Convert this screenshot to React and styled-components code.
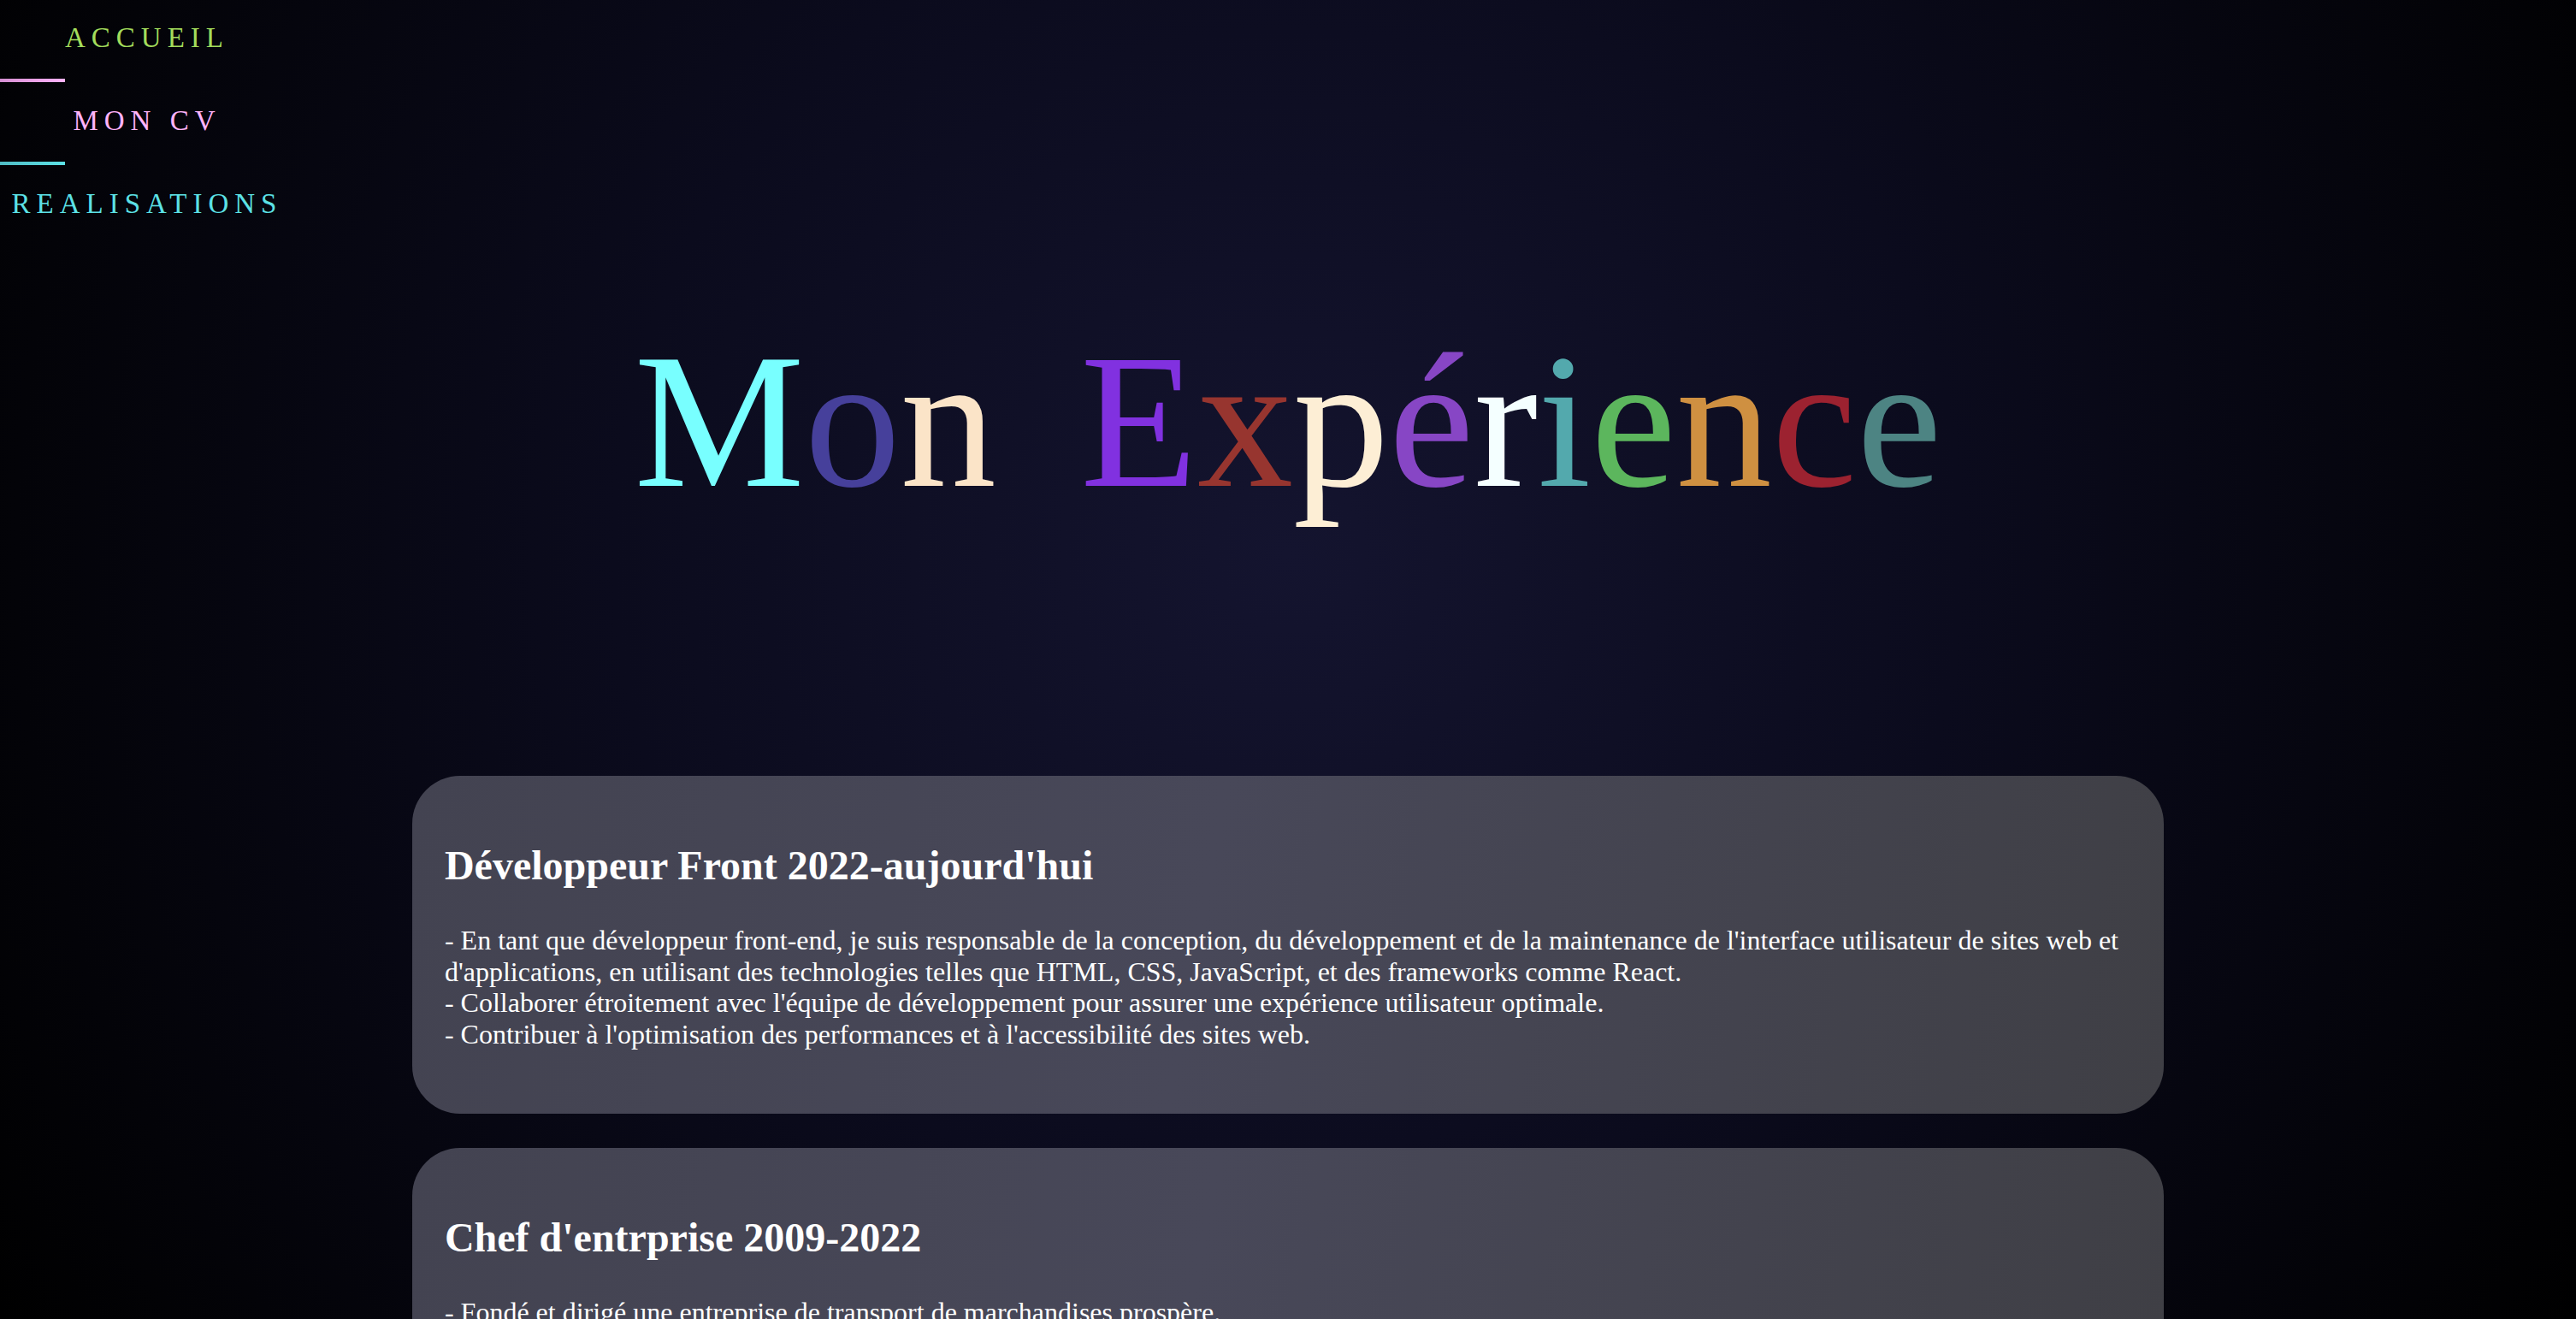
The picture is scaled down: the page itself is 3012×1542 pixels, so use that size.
import styled, { createGlobalStyle } from "styled-components";

const GlobalStyle = createGlobalStyle`
  html, body {
    margin: 0;
    padding: 0;
  }
  body {
    min-height: 100vh;
    background: radial-gradient(circle at 50% 42%, #14142f 0%, #0b0b1d 45%, #000 100%) fixed;
    font-family: "Liberation Serif", "Times New Roman", serif;
    color: #fff;
  }
`;

const titleLetters = [
  ["M", "#78ffff"],
  ["o", "#46409b"],
  ["n", "#fbe4c8"],
  [" ", null],
  ["E", "#8131e0"],
  ["x", "#97352f"],
  ["p", "#fdeed5"],
  ["é", "#8746c5"],
  ["r", "#f4ffff"],
  ["i", "#53a9ad"],
  ["e", "#5cb65d"],
  ["n", "#cf9041"],
  ["c", "#9c2230"],
  ["e", "#4d8483"],
];

const experiences = [
  {
    title: "Développeur Front 2022-aujourd'hui",
    lines: [
      "- En tant que développeur front-end, je suis responsable de la conception, du développement et de la maintenance de l'interface utilisateur de sites web et d'applications, en utilisant des technologies telles que HTML, CSS, JavaScript, et des frameworks comme React.",
      "- Collaborer étroitement avec l'équipe de développement pour assurer une expérience utilisateur optimale.",
      "- Contribuer à l'optimisation des performances et à l'accessibilité des sites web.",
    ],
  },
  {
    title: "Chef d'entrprise 2009-2022",
    lines: [
      "- Fondé et dirigé une entreprise de transport de marchandises prospère.",
    ],
  },
];

const App = () => {
  return (
    <Page>
      <GlobalStyle />
      <Nav>
        <NavLink $color="#a3dd5c">ACCUEIL</NavLink>
        <Divider $from="#d58fd2" $to="#ffb3fa" />
        <NavLink $color="#ffb3fa">MON CV</NavLink>
        <Divider $from="#4fbcc4" $to="#5ce1e6" />
        <NavLink $color="#5ce1e6">REALISATIONS</NavLink>
      </Nav>

      <Title>
        {titleLetters.map(([ch, color], i) =>
          color ? (
            <Letter key={i} $color={color}>{ch}</Letter>
          ) : (
            <Space key={i} />
          )
        )}
      </Title>

      <Cards>
        {experiences.map((exp) => (
          <Card key={exp.title}>
            <CardTitle>{exp.title}</CardTitle>
            <CardText>
              {exp.lines.map((line, i) => (
                <span key={i}>
                  {line}
                  {i < exp.lines.length - 1 && <br />}
                </span>
              ))}
            </CardText>
          </Card>
        ))}
      </Cards>
    </Page>
  );
};

export default App;

const Page = styled.div`
  display: flex;
  flex-direction: column;
  min-height: 100vh;
`;

const Nav = styled.nav`
  display: flex;
  flex-direction: column;
  align-items: flex-start;
  width: 344px;
  margin-top: 25px;
`;

const NavLink = styled.a`
  display: block;
  width: 100%;
  text-align: center;
  font-size: 33px;
  line-height: 38px;
  letter-spacing: 7px;
  color: ${(p) => p.$color};
  cursor: pointer;
`;

const Divider = styled.span`
  display: block;
  width: 76px;
  height: 4px;
  margin: 29px 0 26px;
  background: linear-gradient(90deg, ${(p) => p.$from}, ${(p) => p.$to});
`;

const Title = styled.h1`
  margin: 107px 0 285px;
  text-align: center;
  font-size: 224px;
  font-weight: 400;
  line-height: 1.15;
`;

const Letter = styled.span`
  color: ${(p) => p.$color};
`;

const Space = styled.span`
  display: inline-block;
  width: 0.44em;
`;

const Cards = styled.section`
  display: flex;
  flex-direction: column;
  align-items: center;
  gap: 40px;
  padding-bottom: 40px;
`;

const Card = styled.article`
  width: 68%;
  box-sizing: border-box;
  padding: 40px 38px;
  border-radius: 56px;
  background: linear-gradient(100deg, #434351 0%, #484859 45%, #3f3f45 100%);
`;

const CardTitle = styled.h2`
  margin: 37px 0 42px;
  font-size: 48px;
  font-weight: 700;
  line-height: 1.15;
`;

const CardText = styled.p`
  margin: 0 0 34px;
  font-size: 32px;
  line-height: 1.15;
`;
